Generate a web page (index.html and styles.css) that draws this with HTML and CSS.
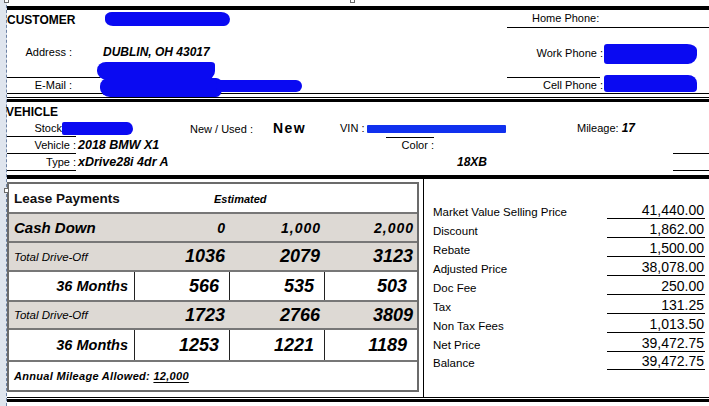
FILE: index.html
```html
<!DOCTYPE html>
<html>
<head>
<meta charset="utf-8">
<title>Lease Worksheet</title>
<link rel="stylesheet" href="styles.css">
</head>
<body>
<div class="page">
  <div class="gutter"></div>
  <span class="handle h-top-left"></span>
  <span class="handle h-top-mid"></span>
  <span class="handle h-left"></span>
  <div class="doc">
    <div class="rule-thick"></div>

    <div class="cust">
      <div class="c-title">CUSTOMER</div>
      <div class="c-name"><span class="blob blob-name"></span></div>
      <div class="c-home">Home Phone:</div>

      <div class="c-lab c-addr">Address :</div>
      <div class="c-val"><span class="bi">DUBLIN, OH 43017</span><span class="blob blob-addr"></span></div>
      <div class="c-phone c-work"><span class="p-lab">Work Phone :</span><span class="blob blob-work"></span></div>

      <div class="c-lab c-mail">E-Mail :</div>
      <div class="c-email"><span class="blob blob-mail"></span><span class="blob blob-mail2"></span></div>
      <div class="c-phone c-cell"><span class="p-lab">Cell Phone :</span><span class="blob blob-cell"></span></div>
    </div>

    <div class="rule-double"></div>

    <div class="veh">
      <div class="v-title">VEHICLE</div>

      <div class="v-lab v-stock rb">Stock :</div>
      <div class="v-val rb"><span class="blob blob-stock"></span></div>
      <div class="v-nu rb">New / Used :<span class="new">New</span></div>
      <div class="v-vin rb">VIN :<span class="blob blob-vin"></span></div>
      <div class="v-mil rb">Mileage: <span class="bi">17</span></div>

      <div class="v-lab rc">Vehicle :</div>
      <div class="v-val v-wide rc bi">2018 BMW X1</div>
      <div class="v-color rc">Color :</div>
      <div class="v-short rc"></div>

      <div class="v-lab rd">Type :</div>
      <div class="v-val v-wide rd bi">xDrive28i 4dr A</div>
      <div class="v-code rd bi">18XB</div>
      <div class="v-short rd"></div>
    </div>

    <div class="rule-thick rule-sep"></div>

    <div class="lease">
      <div class="lcol">
        <div class="lbox">
          <div class="lrow lhead">
            <div class="cell c1 title">Lease Payments</div>
            <div class="cell est">Estimated</div>
          </div>
          <div class="lrow gray cash">
            <div class="cell c1">Cash Down</div>
            <div class="cell num">0</div>
            <div class="cell num">1,000</div>
            <div class="cell num">2,000</div>
          </div>
          <div class="lrow gray drive td1">
            <div class="cell c1">Total Drive-Off</div>
            <div class="cell num">1036</div>
            <div class="cell num">2079</div>
            <div class="cell num">3123</div>
          </div>
          <div class="lrow months m1">
            <div class="cell c1">36 Months</div>
            <div class="cell num">566</div>
            <div class="cell num">535</div>
            <div class="cell num">503</div>
          </div>
          <div class="lrow gray drive td2">
            <div class="cell c1">Total Drive-Off</div>
            <div class="cell num">1723</div>
            <div class="cell num">2766</div>
            <div class="cell num">3809</div>
          </div>
          <div class="lrow months m2">
            <div class="cell c1">36 Months</div>
            <div class="cell num">1253</div>
            <div class="cell num">1221</div>
            <div class="cell num">1189</div>
          </div>
          <div class="lrow annual">
            <div class="cell c1 full">Annual Mileage Allowed:&nbsp;<u>12,000</u></div>
          </div>
        </div>
      </div>

      <div class="prices">
        <div class="prow"><span class="plab">Market Value Selling Price</span><span class="pval">41,440.00</span></div>
        <div class="prow"><span class="plab">Discount</span><span class="pval">1,862.00</span></div>
        <div class="prow"><span class="plab">Rebate</span><span class="pval">1,500.00</span></div>
        <div class="prow"><span class="plab">Adjusted Price</span><span class="pval">38,078.00</span></div>
        <div class="prow"><span class="plab">Doc Fee</span><span class="pval">250.00</span></div>
        <div class="prow"><span class="plab">Tax</span><span class="pval">131.25</span></div>
        <div class="prow"><span class="plab">Non Tax Fees</span><span class="pval">1,013.50</span></div>
        <div class="prow"><span class="plab">Net Price</span><span class="pval">39,472.75</span></div>
        <div class="prow prow-last"><span class="plab">Balance</span><span class="pval">39,472.75</span></div>
      </div>
    </div>

    <div class="rule-double rule-bottom"></div>
  </div>
</div>
</body>
</html>
```

FILE: styles.css
```css
* { box-sizing: border-box; }

html, body {
  margin: 0;
  padding: 0;
  background: #fff;
}

body {
  font-family: "Liberation Sans", Arial, sans-serif;
  color: #000;
  width: 709px;
  height: 406px;
  overflow: hidden;
}

.bi { font-weight: bold; font-style: italic; }

.page {
  position: relative;
  display: flex;
  height: 406px;
}

.gutter {
  flex: none;
  width: 7px;
  background: #dfe5ee;
  border-right: 1px dashed #6d83a6;
}

.handle {
  position: absolute;
  width: 5px;
  height: 5px;
  background: #fff;
  border: 1px solid #6a6a6a;
}
.h-top-left { left: 4px; top: -2px; }
.h-top-mid { left: 350px; top: -2px; }
.h-left { left: 4px; top: 188px; }

.doc {
  flex: 1;
  min-width: 0;
  padding-top: 6px;
}

.rule-thick { height: 4px; background: #000; }
.rule-sep { margin-top: 4px; }

.rule-double {
  height: 5px;
  margin-top: 3px;
  border-top: 1px solid #000;
  border-bottom: 3px solid #000;
}
.rule-bottom { margin-top: 0; }

/* blobs (redaction marks) */
.blob {
  display: inline-block;
  background: #0a0af2;
}

/* ---------- customer ---------- */
.cust {
  display: grid;
  grid-template-columns: 93px 407px 202px;
  grid-template-rows: 18px 50px 16px;
  font-size: 11px;
}

.c-title {
  font-weight: bold;
  font-size: 12px;
  line-height: 18px;
  padding-top: 1px;
}

.c-name { padding-left: 5px; padding-top: 2px; }
.blob-name {
  width: 125px;
  height: 14px;
  border-radius: 7px 9px 6px 8px / 5px 7px 7px 6px;
}

.c-home {
  border-bottom: 1px solid #000;
  padding-left: 25px;
  line-height: 17px;
}

.c-lab {
  text-align: right;
  padding-right: 28px;
}
.c-addr {
  border-bottom: 1px solid #000;
  padding-top: 17px;
  line-height: 14px;
}
.c-mail {
  line-height: 15px;
  border-bottom: 1px solid #000;
}

.c-val {
  position: relative;
  padding-left: 3px;
  padding-top: 16px;
  line-height: 16px;
  font-size: 12px;
}

.blob-addr {
  position: absolute;
  left: -3px;
  top: 34px;
  width: 118px;
  height: 18px;
  border-radius: 9px 4px 9px 10px / 8px 3px 9px 9px;
}

.c-email {
  position: relative;
  border-bottom: 1px solid #000;
}
.blob-mail {
  position: absolute;
  left: 0;
  top: 0;
  width: 122px;
  height: 19px;
  border-radius: 9px 6px 6px 10px / 8px 6px 8px 9px;
}
.blob-mail2 {
  position: absolute;
  left: 116px;
  top: 2px;
  width: 86px;
  height: 12px;
  border-radius: 4px 6px 6px 4px;
}

.c-phone {
  display: flex;
  align-items: center;
}
.p-lab {
  width: 96px;
  text-align: right;
  flex: none;
}
.c-work {
  background: linear-gradient(#000, #000) left bottom / 93px 1px no-repeat;
}
.blob-work {
  margin-left: 1px;
  width: 93px;
  height: 20px;
  margin-top: 2px;
  border-radius: 3px 10px 9px 3px / 3px 6px 9px 3px;
}
.c-cell {
  border-bottom: 1px solid #000;
  align-items: flex-start;
  line-height: 15px;
}
.blob-cell {
  margin-left: 1px;
  width: 93px;
  height: 17px;
  margin-top: -3px;
  border-radius: 3px 9px 4px 3px / 3px 8px 4px 3px;
}

/* ---------- vehicle ---------- */
.veh {
  display: grid;
  grid-template-columns: 69px 114px 150px 46px 48px 143px 96px 36px;
  grid-template-rows: 18px 17px 17px 17px;
  font-size: 11px;
  line-height: 16px;
}

.v-title {
  grid-column: 1 / -1;
  grid-row: 1;
  font-weight: bold;
  font-size: 12px;
  line-height: 18px;
  padding-top: 1px;
  margin-left: -1px;
}

.rb { grid-row: 2; }
.rc { grid-row: 3; }
.rd { grid-row: 4; }

.v-lab {
  grid-column: 1;
  text-align: right;
  border-bottom: 1px solid #000;
}
.v-stock { padding-right: 8px; }

.v-val { grid-column: 2; padding-left: 2px; }
.v-wide { grid-column: 2 / 4; font-size: 12.5px; }

.blob-stock {
  margin-left: -16px;
  margin-top: 2px;
  width: 71px;
  height: 13px;
  vertical-align: top;
  border-radius: 2px 6px 6px 2px / 2px 7px 6px 2px;
}

.v-nu { grid-column: 3; }
.new {
  margin-left: 20px;
  font-weight: bold;
  font-size: 14px;
  letter-spacing: 1.5px;
}

.v-vin { grid-column: 4 / 7; }
.blob-vin {
  margin-left: 3px;
  width: 139px;
  height: 8px;
  vertical-align: -1px;
  background: #1030ee;
  border-radius: 1px;
}

.v-mil { grid-column: 7; }
.v-mil .bi { font-size: 12px; }

.v-color {
  grid-column: 5;
  text-align: right;
  border-top: 1px solid #000;
  line-height: 15px;
}

.v-code {
  grid-column: 6;
  padding-left: 23px;
  font-size: 12px;
}

.v-short {
  grid-column: 8;
  border-bottom: 1px solid #000;
}

/* ---------- lease ---------- */
.lease {
  display: flex;
  height: 218px;
}

.lcol {
  flex: none;
  width: 417px;
  border-right: 1px solid #000;
  padding: 3px 4px 5px 0;
}

.lbox {
  height: 210px;
  border: 2px solid #6b6b6b;
}

.lrow {
  display: grid;
  grid-template-columns: 125px 95px 95px 93px;
  border-bottom: 2px solid #777;
}
.lrow.annual { border-bottom: 0; }

.gray { background: #ddd9d4; }

.lhead { height: 30px; }
.cash { height: 29px; }
.td1 { height: 29px; }
.m1 { height: 30px; }
.td2 { height: 28px; }
.m2 { height: 32px; }
.annual { height: 28px; }

.cell {
  display: flex;
  align-items: center;
  white-space: nowrap;
}

.c1 { padding-left: 5px; }

.title {
  font-weight: bold;
  font-size: 13.5px;
  color: #111;
}

.est {
  grid-column: 2 / 4;
  padding-left: 80px;
  font-weight: bold;
  font-style: italic;
  font-size: 11px;
  padding-top: 2px;
}

.num {
  justify-content: flex-end;
  font-weight: bold;
  font-style: italic;
}

.cash .c1 {
  font-weight: bold;
  font-style: italic;
  font-size: 15px;
}
.cash .num {
  font-size: 14px;
  letter-spacing: 1px;
  padding-right: 3px;
}

.drive .c1 {
  font-style: italic;
  font-size: 11.5px;
}
.drive .num {
  font-size: 18px;
  padding-right: 4px;
}

.months .c1 {
  justify-content: flex-end;
  padding-left: 0;
  padding-right: 6px;
  font-weight: bold;
  font-style: italic;
  font-size: 14.5px;
}
.months .num {
  font-size: 18px;
  padding-right: 10px;
  border-left: 1px solid #222;
}

.full {
  grid-column: 1 / -1;
  font-weight: bold;
  font-style: italic;
  font-size: 11px;
  letter-spacing: 0.3px;
}
.full u { text-underline-offset: 2px; }

/* ---------- prices ---------- */
.prices {
  flex: 1;
  padding-top: 21px;
}

.prow {
  display: flex;
  align-items: flex-end;
  height: 19px;
}
.prow-last { height: 18px; }

.plab {
  flex: 1;
  padding-left: 9px;
  padding-bottom: 1px;
  font-size: 11.5px;
  line-height: 12px;
  white-space: nowrap;
}

.pval {
  flex: none;
  width: 98px;
  margin-right: 4px;
  border-bottom: 1px solid #000;
  text-align: right;
  font-size: 14px;
  line-height: 12px;
  padding-bottom: 2px;
  padding-right: 1px;
}
```
